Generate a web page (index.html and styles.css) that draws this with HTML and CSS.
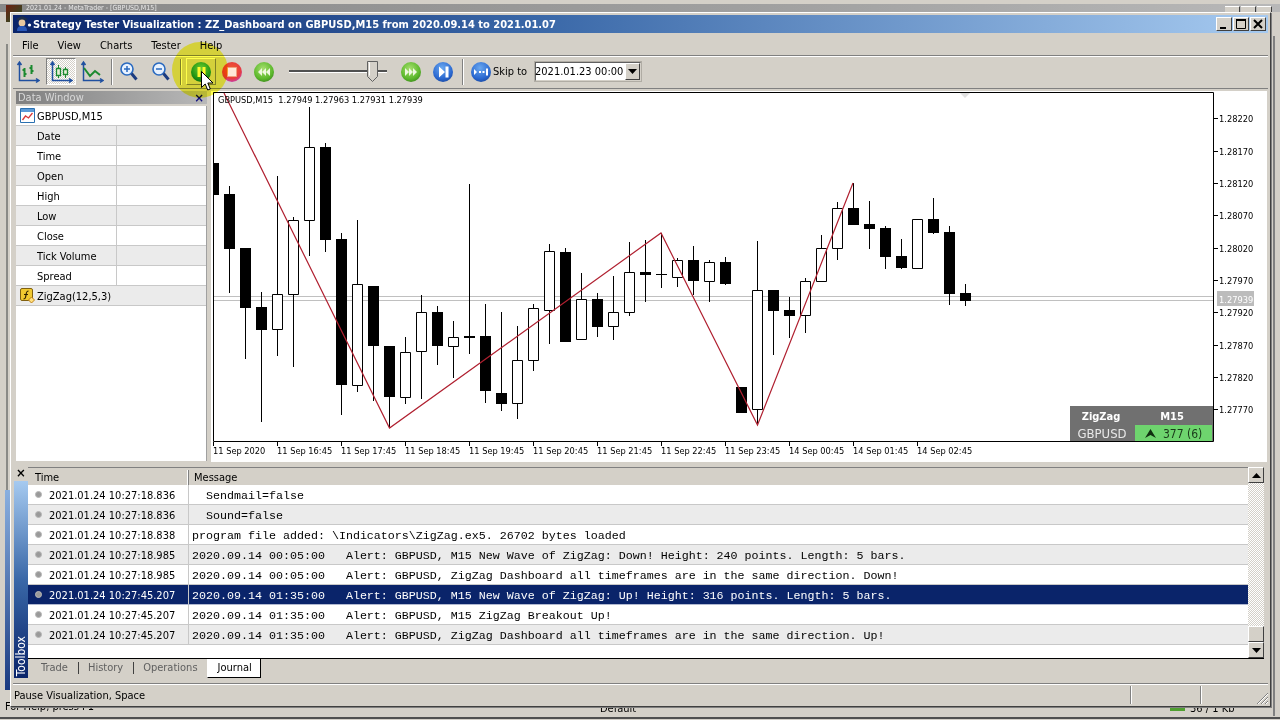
FILE: index.html
```html
<!DOCTYPE html>
<html lang="en">
<head>
<meta charset="utf-8">
<title>Strategy Tester Visualization</title>
<link rel="stylesheet" href="styles.css">
</head>
<body>
<svg class="defs" aria-hidden="true">
  <defs>
    <radialGradient id="gGreen" cx="45%" cy="35%" r="70%"><stop offset="0" stop-color="#a8e070"/><stop offset="0.7" stop-color="#5cb82c"/><stop offset="1" stop-color="#3c8a1c"/></radialGradient>
    <radialGradient id="gPause" cx="50%" cy="35%" r="70%"><stop offset="0" stop-color="#70d0a0"/><stop offset="0.7" stop-color="#209440"/><stop offset="1" stop-color="#106a30"/></radialGradient>
    <radialGradient id="gRed" cx="50%" cy="40%" r="65%"><stop offset="0" stop-color="#f06030"/><stop offset="0.65" stop-color="#e83c3c"/><stop offset="1" stop-color="#c040c0"/></radialGradient>
    <radialGradient id="gBlue" cx="45%" cy="30%" r="75%"><stop offset="0" stop-color="#6aa8f0"/><stop offset="0.7" stop-color="#2a68d0"/><stop offset="1" stop-color="#1a48a0"/></radialGradient>
  </defs>
</svg>

<div class="backdrop">
  <div class="bg-title"><span class="bg-title-text">2021.01.24 - MetaTrader - [GBPUSD,M15]</span></div>
  <div class="bg-btns"><span></span><span></span><span></span></div>
  <div class="bg-logo"></div>
  <div class="bg-left"></div>
  <div class="bg-left-blue"></div>
  <div class="bg-right"></div>
  <div class="bg-status"><span class="bg-help">For Help, press F1</span><span class="bg-default">Default</span><span class="bg-green"></span><span class="bg-kb">36 / 1 Kb</span></div>
</div>

<div class="win">
  <header class="titlebar">
    <svg class="ti-icon" width="17" height="18" viewBox="0 0 17 18"><path d="M1 4 7 1l6 3-6 3z" fill="#20304a"/><circle cx="7" cy="8" r="3.4" fill="#e8c8a0"/><path d="M2 16c0-4 2-5 5-5s5 1 5 5z" fill="#2a58b8"/><circle cx="14.5" cy="10" r="1.6" fill="#fff"/></svg>
    <span class="ti-text">Strategy Tester Visualization : ZZ_Dashboard on GBPUSD,M15 from 2020.09.14 to 2021.01.07</span>
    <div class="ti-btns">
      <span class="ti-btn"><svg width="14" height="12" viewBox="0 0 14 12"><path d="M3 9h6v2H3z" fill="#000"/></svg></span>
      <span class="ti-btn"><svg width="14" height="12" viewBox="0 0 14 12"><path d="M2.5 1.5h9v9h-9z" fill="none" stroke="#000"/><path d="M2 1h10v2H2z" fill="#000"/></svg></span>
      <span class="ti-btn"><svg width="14" height="12" viewBox="0 0 14 12"><path d="M3 2l8 8M11 2l-8 8" stroke="#000" stroke-width="2"/></svg></span>
    </div>
  </header>

  <nav class="menu"><span>File</span><span>View</span><span>Charts</span><span>Tester</span><span>Help</span></nav>

  <div class="toolbar">
    <span class="tbtn"><svg width="24" height="24" viewBox="0 0 24 24"><path d="M3.5 2v18.500h19M1.500 5l2-3 2 3M20 18.500l3 2-3 2" fill="none" stroke="#2050a0" stroke-width="1.500"/><path d="M8.500 8v9M6.500 10h2M8.500 14h2M15.500 5v9M13.500 8h2M15.500 11h2" fill="none" stroke="#1c8a30" stroke-width="2"/></svg></span>
    <span class="tbtn tbtn-on m3"><svg width="24" height="24" viewBox="0 0 24 24"><path d="M3.500 2v18.500h19M1.500 5l2-3 2 3M20 18.500l3 2-3 2" fill="none" stroke="#2050a0" stroke-width="1.500"/><path d="M9.500 5v13M16.500 7v11" stroke="#1c8a30"/><path d="M7.500 8.500h4v7h-4zM14.500 9.500h4v5h-4z" fill="#e8f0d8" stroke="#1c8a30" stroke-width="1.300"/></svg></span>
    <span class="tbtn m1"><svg width="24" height="24" viewBox="0 0 24 24"><path d="M3.500 2v18.500h19M1.500 5l2-3 2 3M20 18.500l3 2-3 2" fill="none" stroke="#2050a0" stroke-width="1.500"/><path d="M4 8l6 8 5-5 5 4" fill="none" stroke="#1c8a30" stroke-width="2"/></svg></span>
    <span class="sep m4"></span>
    <span class="tbtn m1"><svg width="20" height="22" viewBox="0 0 20 22"><circle cx="8" cy="8" r="6" fill="#e8f2ff" stroke="#2a6ac0" stroke-width="1.600"/><path d="M5 8h6M8 5v6" stroke="#2a6ac0" stroke-width="1.500"/><path d="M12.500 12.500l5 6" stroke="#1c3c80" stroke-width="3"/></svg></span>
    <span class="tbtn m2"><svg width="20" height="22" viewBox="0 0 20 22"><circle cx="8" cy="8" r="6" fill="#e8f2ff" stroke="#2a6ac0" stroke-width="1.600"/><path d="M5 8h6" stroke="#2a6ac0" stroke-width="1.500"/><path d="M12.500 12.500l5 6" stroke="#1c3c80" stroke-width="3"/></svg></span>
    <span class="sep m4"></span>
    <span class="tbtn tbtn-hover m4"><svg width="22" height="22" viewBox="0 0 22 22"><circle cx="11" cy="11" r="10" fill="url(#gPause)"/><path d="M7.500 6h3v10h-3zM12.500 6h3v10h-3z" fill="#fff8a0"/></svg></span>
    <span class="tbtn m1"><svg width="22" height="22" viewBox="0 0 22 22"><circle cx="11" cy="11" r="10" fill="url(#gRed)"/><path d="M6.500 6.500h9v9h-9z" fill="#ffe8d8" stroke="#f0a080"/></svg></span>
    <span class="tbtn m2"><svg width="22" height="22" viewBox="0 0 22 22"><circle cx="11" cy="11" r="10" fill="url(#gGreen)"/><path d="M9 7v8l-4-4zM13 7v8l-4-4zM17 7v8l-4-4z" fill="#eef8e0"/></svg></span>
    <div class="slider m10"><span class="slider-track"></span><svg class="slider-thumb" width="11" height="21" viewBox="0 0 11 21"><path d="M.5.500h10v15l-5 5-5-5z" fill="#d4d0c8" stroke="#606060"/><path d="M1.500 1.500h1v13" fill="none" stroke="#fff"/></svg></div>
    <span class="tbtn m9"><svg width="22" height="22" viewBox="0 0 22 22"><circle cx="11" cy="11" r="10" fill="url(#gGreen)"/><path d="M5 7v8l4-4zM9 7v8l4-4zM13 7v8l4-4z" fill="#eef8e0"/></svg></span>
    <span class="tbtn m2"><svg width="22" height="22" viewBox="0 0 22 22"><circle cx="11" cy="11" r="10" fill="url(#gBlue)"/><path d="M7 5.500v11l6-5.500zM13.500 5.500h3v11h-3z" fill="#fff"/></svg></span>
    <span class="sep m4"></span>
    <span class="tbtn m2"><svg width="22" height="22" viewBox="0 0 22 22"><circle cx="11" cy="11" r="10" fill="url(#gBlue)"/><path d="M4 8v6l3-3zM9 10h2v2H9zM12.500 10h2v2h-2zM16 7.500h2v7h-2z" fill="#fff"/></svg></span>
    <span class="skip-label">Skip to</span>
    <div class="combo"><span class="combo-val">2021.01.23 00:00</span><span class="combo-btn"><svg width="9" height="5" viewBox="0 0 9 5"><path d="M0 0h9L4.500 5z" fill="#000"/></svg></span></div>
  </div>

  <div class="main">
    <aside class="dock">
      <div class="dock-title"><span>Data Window</span><b class="dock-x">×</b></div>
      <div class="dw">
        <div class="dw-row dw-head">
          <svg class="dw-ico" width="15" height="15" viewBox="0 0 15 15"><path d="M.5.500h14v14H.5z" fill="#fff" stroke="#2a70b0"/><path d="M1 1h13v3H1z" fill="#5a9ad8"/><path d="M2.500 12l3-4 3 2 4-5" fill="none" stroke="#d83838" stroke-width="1.300"/></svg>
          <span class="dw-label">GBPUSD,M15</span>
        </div>
        <div class="dw-row alt"><span class="dw-n">Date</span><span class="dw-v"></span></div>
        <div class="dw-row"><span class="dw-n">Time</span><span class="dw-v"></span></div>
        <div class="dw-row alt"><span class="dw-n">Open</span><span class="dw-v"></span></div>
        <div class="dw-row"><span class="dw-n">High</span><span class="dw-v"></span></div>
        <div class="dw-row alt"><span class="dw-n">Low</span><span class="dw-v"></span></div>
        <div class="dw-row"><span class="dw-n">Close</span><span class="dw-v"></span></div>
        <div class="dw-row alt"><span class="dw-n">Tick Volume</span><span class="dw-v"></span></div>
        <div class="dw-row"><span class="dw-n">Spread</span><span class="dw-v"></span></div>
        <div class="dw-row dw-head alt">
          <svg class="dw-ico" width="15" height="15" viewBox="0 0 15 15"><rect x=".5" y=".5" width="12" height="12" rx="1.500" fill="#f0c830" stroke="#806010"/><path d="M8.500 3c-2 0-2 1-2.500 4s-.5 4-2.500 4M4 6.500h4" fill="none" stroke="#302000" stroke-width="1.200"/><path d="M11.500 9l3 3-3 3-3-3z" fill="#ffe080" stroke="#c08010"/></svg>
          <span class="dw-label">ZigZag(12,5,3)</span>
        </div>
      </div>
    </aside>

    <svg class="chart" width="1056" height="371" viewBox="211 91 1056 371">
      <rect class="c-bg" x="211" y="91" width="1056" height="371"/>
      <path class="c-grey" d="M213 296.500H1213M213 300.500H1213"/>
      <path class="c-notch" d="M960 93h10l-5 5z"/>
      <path class="c-wick" d="M229.500 186V293M245.500 248V359M261.500 292V422M277.500 176V356M293.500 217V367M309.500 107V256M325.500 143V252M341.500 233V415M357.500 220V392M373.500 286V401M389.500 346V428M405.500 337V404M421.500 295V399M437.500 306V365M453.500 321V378M469.500 184V354M485.500 304V403M501.500 312V411M517.500 326V419M533.500 304V371M549.500 244V344M565.500 248V342M581.500 273V339M597.500 293V337M613.500 276V340M629.500 242V316M645.500 240V302M661.500 233V288M656 274.500H667M677.500 258V287M693.500 246V295M709.500 260V302M725.500 257V285M757.500 241V425M773.500 290V355M789.500 297V338M805.500 278V333M821.500 235V281M837.500 202V260M853.500 183V225M869.500 201V249M885.500 226V269M901.500 239V269M917.500 219V268M933.500 198V234M949.500 226V305M965.500 284V306"/>
      <path class="c-white" d="M272.500 294.500h10v35h-10zM288.500 220.500h10v74h-10zM304.500 147.500h10v73h-10zM352.500 284.500h10v101h-10zM400.500 352.500h10v45h-10zM416.500 312.500h10v39h-10zM448.500 337.500h10v9h-10zM512.500 360.500h10v43h-10zM528.500 308.500h10v52h-10zM544.500 251.500h10v59h-10zM576.500 299.500h10v40h-10zM608.500 312.500h10v14h-10zM624.500 272.500h10v40h-10zM672.500 260.500h10v17h-10zM704.500 262.500h10v19h-10zM752.500 290.500h10v119h-10zM800.500 281.500h10v34h-10zM816.500 248.500h10v33h-10zM832.500 208.500h10v40h-10zM912.500 219.500h10v49h-10z"/>
      <path class="c-black" d="M213 163h6v32h-6zM224 194h11v55h-11zM240 248h11v60h-11zM256 307h11v23h-11zM320 147h11v93h-11zM336 239h11v146h-11zM368 286h11v60h-11zM384 346h11v51h-11zM432 312h11v34h-11zM464 336h11v2h-11zM480 336h11v55h-11zM496 393h11v11h-11zM560 252h11v90h-11zM592 299h11v28h-11zM640 272h11v3h-11zM688 260h11v21h-11zM720 262h11v22h-11zM736 387h11v26h-11zM768 290h11v21h-11zM784 310h11v6h-11zM848 208h11v17h-11zM864 224h11v5h-11zM880 228h11v29h-11zM896 256h11v12h-11zM928 219h11v14h-11zM944 232h11v62h-11zM960 293h11v8h-11z"/>
      <polyline class="c-zig" points="224,93 389.500,428 661,233 757.500,425 853,183"/>
      <path class="c-axis" d="M213.500 92.500H1213.500V441.500H213.500Z"/>
      <path class="c-tick" d="M1214 118.500h4M1214 151.500h4M1214 183.500h4M1214 215.500h4M1214 248.500h4M1214 280.500h4M1214 312.500h4M1214 345.500h4M1214 377.500h4M1214 409.500h4M213.500 442v4M277.500 442v4M341.500 442v4M405.500 442v4M469.500 442v4M533.500 442v4M597.500 442v4M661.500 442v4M725.500 442v4M789.500 442v4M853.500 442v4M917.500 442v4"/>
      <text class="c-txt" x="218" y="103" xml:space="preserve">GBPUSD,M15  1.27949 1.27963 1.27931 1.27939</text>
      <g class="c-txt">
        <text x="1219" y="122">1.28220</text><text x="1219" y="155">1.28170</text><text x="1219" y="187">1.28120</text><text x="1219" y="219">1.28070</text><text x="1219" y="252">1.28020</text><text x="1219" y="284">1.27970</text><text x="1219" y="316">1.27920</text><text x="1219" y="349">1.27870</text><text x="1219" y="381">1.27820</text><text x="1219" y="413">1.27770</text>
        <text x="213" y="454">11 Sep 2020</text><text x="277" y="454">11 Sep 16:45</text><text x="341" y="454">11 Sep 17:45</text><text x="405" y="454">11 Sep 18:45</text><text x="469" y="454">11 Sep 19:45</text><text x="533" y="454">11 Sep 20:45</text><text x="597" y="454">11 Sep 21:45</text><text x="661" y="454">11 Sep 22:45</text><text x="725" y="454">11 Sep 23:45</text><text x="789" y="454">14 Sep 00:45</text><text x="853" y="454">14 Sep 01:45</text><text x="917" y="454">14 Sep 02:45</text>
      </g>
      <rect class="c-price" x="1217" y="291" width="37" height="15"/>
      <text class="c-ptxt" x="1219" y="303">1.27939</text>
      <rect class="c-panel" x="1070" y="406" width="143" height="35"/>
      <rect class="c-green" x="1135" y="425" width="77" height="16"/>
      <text class="c-pb" x="1101" y="420" text-anchor="middle">ZigZag</text>
      <text class="c-pb" x="1172" y="420" text-anchor="middle">M15</text>
      <text class="c-pl" x="1102" y="438" text-anchor="middle">GBPUSD</text>
      <path class="c-arrow" d="M1150.500 429l5.500 9-5.500-3-5.500 3z"/>
      <text class="c-pd" x="1163" y="438">377 (6)</text>
    </svg>
  </div>

  <section class="toolbox">
    <div class="tb-side">
      <b class="tb-x">×</b>
      <div class="tb-strip"><span class="tb-name">Toolbox</span></div>
    </div>
    <div class="tb-body">
      <div class="tb-list">
        <div class="log">
          <div class="log-head"><span class="lh-time">Time</span><span class="lh-msg">Message</span></div>
          <div class="log-row"><span class="l-time"><i class="dot"></i>2021.01.24 10:27:18.836</span><span class="l-msg">  Sendmail=false</span></div>
          <div class="log-row alt"><span class="l-time"><i class="dot"></i>2021.01.24 10:27:18.836</span><span class="l-msg">  Sound=false</span></div>
          <div class="log-row"><span class="l-time"><i class="dot"></i>2021.01.24 10:27:18.838</span><span class="l-msg">program file added: \Indicators\ZigZag.ex5. 26702 bytes loaded</span></div>
          <div class="log-row alt"><span class="l-time"><i class="dot"></i>2021.01.24 10:27:18.985</span><span class="l-msg">2020.09.14 00:05:00   Alert: GBPUSD, M15 New Wave of ZigZag: Down! Height: 240 points. Length: 5 bars.</span></div>
          <div class="log-row"><span class="l-time"><i class="dot"></i>2021.01.24 10:27:18.985</span><span class="l-msg">2020.09.14 00:05:00   Alert: GBPUSD, ZigZag Dashboard all timeframes are in the same direction. Down!</span></div>
          <div class="log-row sel"><span class="l-time"><i class="dot"></i>2021.01.24 10:27:45.207</span><span class="l-msg">2020.09.14 01:35:00   Alert: GBPUSD, M15 New Wave of ZigZag: Up! Height: 316 points. Length: 5 bars.</span></div>
          <div class="log-row"><span class="l-time"><i class="dot"></i>2021.01.24 10:27:45.207</span><span class="l-msg">2020.09.14 01:35:00   Alert: GBPUSD, M15 ZigZag Breakout Up!</span></div>
          <div class="log-row alt"><span class="l-time"><i class="dot"></i>2021.01.24 10:27:45.207</span><span class="l-msg">2020.09.14 01:35:00   Alert: GBPUSD, ZigZag Dashboard all timeframes are in the same direction. Up!</span></div>
        </div>
        <div class="sbar">
          <span class="sb-btn"><svg width="9" height="5" viewBox="0 0 9 5"><path d="M0 5h9L4.500 0z" fill="#000"/></svg></span>
          <span class="sb-track"></span>
          <span class="sb-btn"></span>
          <span class="sb-btn"><svg width="9" height="5" viewBox="0 0 9 5"><path d="M0 0h9L4.500 5z" fill="#000"/></svg></span>
        </div>
      </div>
      <div class="tabs">
        <span class="tab">Trade</span><span class="tab-sep"></span><span class="tab">History</span><span class="tab-sep"></span><span class="tab">Operations</span><span class="tab tab-on">Journal</span>
      </div>
    </div>
  </section>

  <footer class="status">
    <span class="st-text">Pause Visualization, Space</span>
    <span class="st-cell st-a"></span>
    <span class="st-cell st-b"><svg class="grip" width="12" height="12" viewBox="0 0 12 12"><path d="M1 12 12 1M5 12l7-7M9 12l3-3" stroke="#808080"/><path d="M2 12 12 2M6 12l6-6M10 12l2-2" stroke="#fff"/></svg></span>
  </footer>
</div>

<div class="spot"></div>
<svg class="cursor" width="14" height="21" viewBox="0 0 14 21"><path d="M.5.500V16.500L4.200 13l2.500 6 2.600-1-2.500-6H12Z" fill="#fff" stroke="#000"/></svg>
</body>
</html>
```
FILE: styles.css
```css
* { box-sizing: border-box; }
html, body { margin: 0; padding: 0; }
body {
  position: relative;
  width: 1280px;
  height: 720px;
  overflow: hidden;
  background: #d4d0c8;
  font-family: "DejaVu Sans Condensed", "DejaVu Sans", sans-serif;
  font-stretch: condensed;
  font-size: 11px;
  color: #000;
}
.defs { position: absolute; width: 0; height: 0; }

/* Window behind the tester */
.backdrop { position: absolute; inset: 0; overflow: hidden; }
.bg-title { position: absolute; left: 0; top: 4px; width: 1280px; height: 8px; background: linear-gradient(90deg, #888, #a0a0a0 60%, #b8b8b8); }
.bg-title-text { display: block; margin-left: 26px; color: #e8e8e8; font-size: 7px; line-height: 8px; white-space: nowrap; }
.bg-btns { position: absolute; left: 1225px; top: 6px; display: flex; gap: 1px; }
.bg-btns span { width: 15px; height: 6px; background: #d4d0c8; border-top: 1px solid #fff; border-right: 1px solid #404040; }
.bg-logo { position: absolute; left: 6px; top: 5px; width: 16px; height: 17px; background: linear-gradient(135deg, #702010, #404020 60%, #708040); }
.bg-left { position: absolute; left: 6px; top: 44px; width: 2px; height: 640px; background: #8a8a86; }
.bg-left-blue { position: absolute; left: 5px; top: 490px; width: 5px; height: 200px; background: linear-gradient(#8ab0e0, #1a3a80); }
.bg-right { position: absolute; left: 1273px; top: 36px; width: 2px; height: 680px; background: #808080; }
.bg-status { position: absolute; left: 0; top: 700px; width: 1280px; height: 19px; border-bottom: 2px solid #505050; }
.bg-help { position: absolute; left: 5px; top: 0; }
.bg-default { position: absolute; left: 600px; top: 2px; }
.bg-green { position: absolute; left: 1170px; top: 8px; width: 15px; height: 3px; background: #50a030; }
.bg-kb { position: absolute; left: 1190px; top: 2px; }

/* Tester window */
.win {
  position: absolute; left: 10px; top: 12px;
  width: 1261px; height: 695px;
  display: flex; flex-direction: column;
  padding: 2px;
  background: #d4d0c8;
  border: 1px solid;
  border-color: #fff #404040 #404040 #fff;
  box-shadow: 1px 1px 0 #808080;
}
.titlebar {
  height: 18px; flex: none;
  display: flex; align-items: center;
  background: linear-gradient(90deg, #0a246a, #3a68a8 42%, #a6caf0);
  color: #fff;
}
.ti-icon { flex: none; margin-left: 2px; }
.ti-text { margin-left: 1px; font-weight: 700; font-size: 11px; white-space: nowrap; }
.ti-btns { margin-left: auto; display: flex; gap: 1px; margin-right: 2px; }
.ti-btn {
  width: 16px; height: 14px;
  display: flex; align-items: center; justify-content: center;
  background: #d4d0c8;
  border: 1px solid; border-color: #fff #404040 #404040 #fff;
}
.menu { height: 22px; flex: none; display: flex; align-items: center; gap: 19px; padding: 2px 0 0 9px; }

.toolbar {
  height: 34px; flex: none;
  display: flex; align-items: center;
  border-top: 1px solid #808080;
  box-shadow: inset 0 1px 0 #fff;
  border-bottom: 1px solid #808080;
  padding-bottom: 1px;
}
.tbtn { flex: none; width: 30px; height: 27px; display: flex; align-items: center; justify-content: center; }
.tbtn-on {
  border: 1px solid; border-color: #808080 #fff #fff #808080;
  background: repeating-conic-gradient(#fff 0 25%, #d4d0c8 0 50%) 0 0 / 2px 2px;
}
.tbtn-hover { border: 1px solid; border-color: #fff #808080 #808080 #fff; }
.sep { flex: none; width: 2px; height: 26px; background: linear-gradient(90deg, #808080 50%, #fff 50%); }
.m1 { margin-left: 1px; }
.m2 { margin-left: 2px; }
.m3 { margin-left: 3px; }
.m4 { margin-left: 4px; }
.m9 { margin-left: 9px; }
.m10 { margin-left: 10px; }
.slider { flex: none; position: relative; width: 98px; height: 24px; display: flex; align-items: center; }
.slider-track { width: 100%; height: 3px; background: #fff; border-top: 2px solid #505050; }
.slider-thumb { position: absolute; left: 78px; top: 1px; }
.skip-label { flex: none; width: 38px; margin-left: -3px; white-space: nowrap; }
.combo {
  flex: none; margin-left: 3px;
  width: 108px; height: 21px;
  display: flex; align-items: center; justify-content: space-between;
  background: #fff;
  border: 2px solid; border-color: #606060 #d4d0c8 #d4d0c8 #606060;
  outline: 1px solid #b0aca4; outline-offset: -1px;
}
.combo-val { white-space: nowrap; margin-left: -1px; }
.combo-btn {
  flex: none; width: 15px; height: 17px;
  display: flex; align-items: center; justify-content: center;
  background: #d4d0c8;
  border: 1px solid; border-color: #fff #404040 #404040 #fff;
}

.main { height: 374px; flex: none; display: flex; padding-top: 2px; }
.dock { flex: none; width: 198px; padding: 0 4px 2px 3px; display: flex; flex-direction: column; }
.dock-title {
  height: 13px; flex: none;
  display: flex; align-items: center; justify-content: space-between;
  padding: 0 3px 0 2px;
  background: linear-gradient(90deg, #808080, #b8b8b8);
  color: #d8d8d8;
}
.dock-x { color: #101080; font-size: 13px; line-height: 1; }
.dw { flex: 1; margin-top: 2px; background: #fff; border-right: 1px solid #a0a0a0; }
.dw-row { height: 20px; display: flex; align-items: center; border-bottom: 1px solid #c8c8c8; background: #fff; }
.dw-row.alt { background: #ebebeb; }
.dw-n { width: 101px; height: 100%; flex: none; padding: 2px 0 0 21px; display: flex; align-items: center; border-right: 1px solid #c8c8c8; }
.dw-v { flex: 1; }
.dw-ico { flex: none; margin: 0 2px 0 4px; }
.dw-label { padding-top: 2px; }

.chart { flex: none; display: block; }
.c-bg { fill: #fff; }
.c-grey { stroke: #c0c0c0; fill: none; }
.c-notch { fill: #e0e0e0; }
.c-wick { stroke: #000; fill: none; }
.c-white { fill: #fff; stroke: #000; }
.c-black { fill: #000; }
.c-zig { fill: none; stroke: #b02030; stroke-width: 1.2; }
.c-axis { fill: none; stroke: #000; }
.c-tick { stroke: #000; fill: none; }
.c-txt { font-size: 9.2px; fill: #000; white-space: pre; }
.c-price { fill: #bcbcbc; }
.c-ptxt { font-size: 9.2px; fill: #fff; }
.c-panel { fill: #707070; }
.c-green { fill: #6ed46e; }
.c-pb { font-size: 11px; font-weight: 700; fill: #fff; }
.c-pl { font-size: 13px; fill: #e8e8e8; }
.c-pd { font-size: 12px; fill: #1a3a1a; }
.c-arrow { fill: #103010; }

.toolbox { height: 218px; flex: none; margin-top: 2px; display: flex; padding: 2px 4px 5px 1px; }
.tb-side { flex: none; width: 14px; display: flex; flex-direction: column; }
.tb-x { height: 14px; flex: none; text-align: center; font-size: 13px; line-height: 12px; color: #000; }
.tb-strip {
  flex: 1; position: relative;
  background: linear-gradient(#a6caf0, #3a68a8 50%, #0a246a);
}
.tb-name {
  position: absolute; left: 0; bottom: 2px; width: 14px;
  writing-mode: vertical-rl; transform: rotate(180deg);
  font-size: 12px; line-height: 14px; color: #fff;
}
.tb-body { flex: 1; display: flex; flex-direction: column; }
.tb-list { height: 192px; flex: none; display: flex; background: #fff; border-bottom: 1px solid #000; }
.log { flex: 1; }
.log-head { height: 18px; display: flex; align-items: center; padding-top: 2px; background: #d4d0c8; border-top: 1px solid #808080; }
.lh-time { width: 160px; height: 100%; padding-left: 7px; display: flex; align-items: center; border-right: 1px solid #fff; box-shadow: 1px 0 0 #808080; }
.lh-msg { padding-left: 6px; }
.log-row { height: 20px; display: flex; align-items: center; padding-top: 2px; background: #fff; border-bottom: 1px solid #c8c8c8; }
.log-row.alt { background: #ebebeb; }
.log-row.sel { background: #0a246a; color: #fff; border-bottom-color: #b0b8d0; }
.l-time { width: 160px; flex: none; display: flex; align-items: center; padding-left: 7px; white-space: nowrap; }
.dot { width: 7px; height: 7px; border-radius: 50%; background: #9a9a9a; border: 1px solid #b8b8b8; margin: -2px 7px 0 0; flex: none; }
.l-msg {
  align-self: stretch; margin-top: -2px; padding: 2px 0 0 3px;
  display: flex; align-items: center;
  border-left: 1px solid #c8c8c8;
  font-family: "Liberation Mono", monospace; font-size: 11.67px; white-space: pre;
}
.sbar { flex: none; width: 16px; display: flex; flex-direction: column; }
.sb-btn {
  height: 16px; flex: none;
  display: flex; align-items: center; justify-content: center;
  background: #d4d0c8;
  border: 1px solid; border-color: #fff #404040 #404040 #fff;
}
.sb-track { flex: 1; background: repeating-conic-gradient(#fff 0 25%, #d4d0c8 0 50%) 0 0 / 2px 2px; }
.tabs { flex: 1; display: flex; align-items: flex-start; color: #606060; padding: 1px 0 0 13px; }
.tab { white-space: nowrap; line-height: 15px; }
.tab-sep { width: 1px; height: 12px; background: #404040; margin: 2px 9px 0 10px; }
.tab-on {
  margin-left: 9px; margin-top: -1px; height: 19px; width: 54px;
  padding: 0 0 2px 10px; display: flex; align-items: center;
  background: #fff; color: #000;
  border: 1px solid #000; border-top: 0;
  border-left-color: #fff;
}
.status {
  flex: 1; margin-top: 1px;
  display: flex; align-items: center;
  padding: 1px 0 0 1px;
  border-top: 1px solid #fff;
  box-shadow: 0 -1px 0 #808080;
}
.st-text { width: 1116px; flex: none; }
.st-cell { height: 18px; flex: none; border-left: 1px solid #808080; box-shadow: inset 1px 0 0 #fff; position: relative; }
.st-a { width: 70px; }
.st-b { flex: 1; }
.grip { position: absolute; right: 0; bottom: 0; }

/* Recorder's click highlight and the mouse pointer, over everything */
.spot { position: absolute; left: 172px; top: 42px; width: 56px; height: 56px; border-radius: 50%; background: #ffff4b; mix-blend-mode: multiply; }
.cursor { position: absolute; left: 201px; top: 71px; }
```
